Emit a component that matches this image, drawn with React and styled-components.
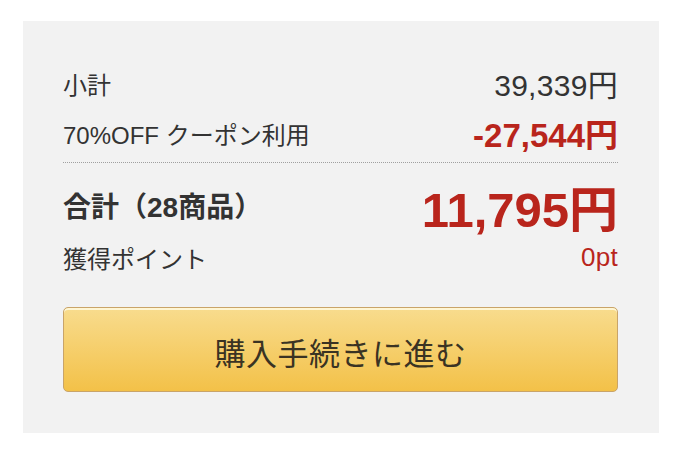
import React from 'react';
import styled, { createGlobalStyle } from 'styled-components';

const GlobalStyle = createGlobalStyle`
  body {
    margin: 0;
    background: #fff;
    font-family: "Liberation Sans", "Noto Sans CJK JP", sans-serif;
    color: #333;
  }
`;

const Panel = styled.section`
  box-sizing: border-box;
  width: 636px;
  height: 412px;
  margin: 21px 0 0 23px;
  padding: 37px 41px 0 40px;
  background-color: #f2f2f2;
`;

const Row = styled.div`
  display: flex;
  justify-content: space-between;
  align-items: center;
  height: ${(props) => props.h}px;
  margin-top: ${(props) => props.gap || 0}px;
`;

const Label = styled.span`
  font-size: ${(props) => (props.strong ? 28 : 24)}px;
  font-weight: ${(props) => (props.strong ? 'bold' : 'normal')};
  color: #333;
`;

const Value = styled.span`
  font-size: ${(props) => props.size}px;
  font-weight: ${(props) => (props.bold ? 'bold' : 'normal')};
  color: ${(props) => (props.red ? '#b9251c' : '#333')};
  letter-spacing: ${(props) => (props.bold ? '0' : '0.3px')};
`;

const Divider = styled.hr`
  margin: 4px 0 0;
  border: none;
  border-top: 1px dotted #a0a0a0;
  height: 0;
`;

const CheckoutButton = styled.button`
  display: block;
  box-sizing: border-box;
  width: 100%;
  height: 85px;
  margin-top: 29px;
  border: 1.5px solid #c9a469;
  border-radius: 5px;
  background: linear-gradient(#f8dc8e, #f3c148);
  box-shadow: inset 0 2px 0 rgba(255, 248, 220, 0.9);
  font-family: "Noto Sans CJK JP", sans-serif;
  font-size: 31px;
  color: #3a3323;
  letter-spacing: 0.5px;
  padding-top: 4px;
  cursor: pointer;
`;

function App() {
  return (
    <>
      <GlobalStyle />
      <Panel>
        <Row h={50}>
          <Label>小計</Label>
          <Value size={30}>39,339円</Value>
        </Row>
        <Row h={50}>
          <Label>70%OFF クーポン利用</Label>
          <Value size={33} bold red>-27,544円</Value>
        </Row>
        <Divider />
        <Row h={62} gap={11}>
          <Label strong>合計（28商品）</Label>
          <Value size={49} bold red>11,795円</Value>
        </Row>
        <Row h={42}>
          <Label>獲得ポイント</Label>
          <Value size={26} red>0pt</Value>
        </Row>
        <CheckoutButton>購入手続きに進む</CheckoutButton>
      </Panel>
    </>
  );
}

export default App;
